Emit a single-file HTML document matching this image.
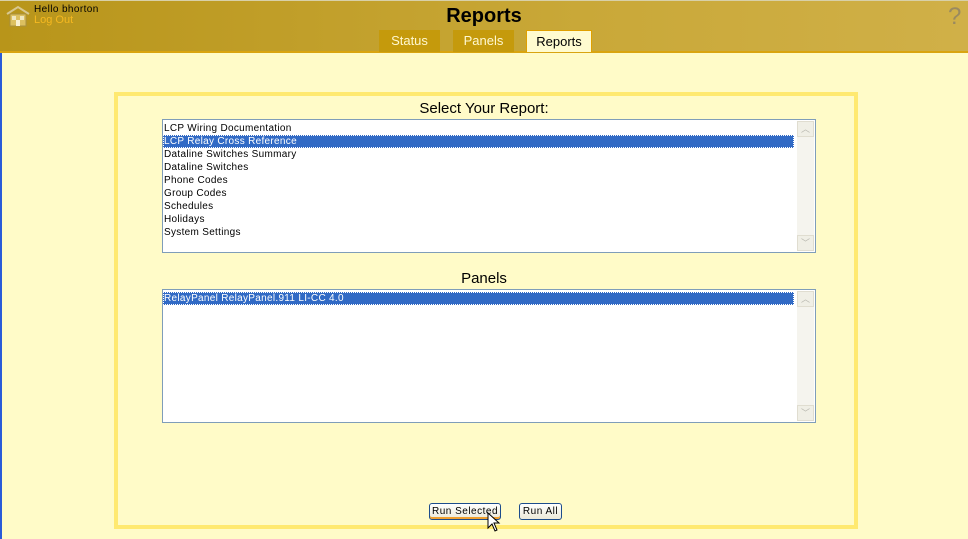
<!DOCTYPE html>
<html><head><style>
*{margin:0;padding:0;box-sizing:border-box}
body{width:968px;height:539px;overflow:hidden;background:#fffbc8;font-family:"Liberation Sans",sans-serif;position:relative}
#hdr{position:absolute;left:0;top:0;width:968px;height:53px;background:linear-gradient(to right,#b8951a,#c9a838 60%,#d0b048);border-top:1px solid #d8d0a8;border-bottom:2px solid #d9a410}
#lb{position:absolute;left:0;top:53px;width:2px;height:486px;background:#2a5bd8}
.t{position:absolute;top:30px;height:22px;font-size:13px;text-align:center;line-height:22px;color:#fff8d0;background:#c59a0c}
.sel{background:#fffbd0;color:#000;border:1px solid #e0a000;border-bottom:none}
#box{position:absolute;left:114px;top:92px;width:744px;height:437px;border:4px solid #ffe970}
.lst{position:absolute;left:162px;width:654px;height:134px;background:#fff;border:1px solid #7f9db9}
.row{height:13px;line-height:13px;font-size:10px;letter-spacing:0.3px;padding-left:1px;color:#000;white-space:nowrap}
.hl{background:#316ac5;color:#fff;width:631px;outline:1px dotted #fff;outline-offset:-1px}
.sb{position:absolute;right:1px;top:1px;width:17px;bottom:1px;background:#f5f4ee}
.ar{position:absolute;left:0;width:17px;height:16px;background:#f0efe6;border:1px solid #e0ddd0;color:#b8b8b0;font-size:9px;text-align:center;line-height:14px}
.lbl{position:absolute;width:968px;text-align:center;font-size:15px;color:#000}
.btn{position:absolute;top:503px;height:17px;font-size:10px;letter-spacing:0.5px;border:1px solid #1c4c8c;border-radius:3px;background:linear-gradient(#fff,#ece9d8);line-height:16px;text-align:center}
</style></head><body>
<div id="hdr"></div><div id="lb"></div>
<svg style="position:absolute;left:6px;top:5px" width="24" height="22" viewBox="0 0 24 22"><path d="M1 9 L12 2 L23 9" fill="none" stroke="#d8c890" stroke-width="2"/><rect x="4" y="9" width="16" height="12" fill="#dcc060" stroke="#a89040"/><rect x="6" y="11" width="4" height="4" fill="#f0e8c0"/><rect x="14" y="11" width="4" height="4" fill="#f0e8c0"/><rect x="10" y="15" width="4" height="6" fill="#f8f0d0"/></svg>
<div style="position:absolute;left:34px;top:4px;font-size:10px;letter-spacing:0.4px;color:#000">Hello bhorton</div>
<div style="position:absolute;left:34px;top:14px;font-size:11px;color:#f5b820">Log Out</div>
<div style="position:absolute;left:0;width:968px;top:5px;text-align:center;font-size:20px;font-weight:bold;color:#000">Reports</div>
<div style="position:absolute;left:948px;top:3px;font-size:24px;color:#9a8a60">?</div>
<div class="t" style="left:379px;width:61px">Status</div>
<div class="t" style="left:453px;width:61px">Panels</div>
<div class="t sel" style="left:526px;width:66px">Reports</div>
<div id="box"></div>
<div class="lbl" style="top:100px">Select Your Report:</div>
<div class="lst" style="top:119px"><div style="padding-top:2px">
<div class="row">LCP Wiring Documentation</div>
<div class="row hl">LCP Relay Cross Reference</div>
<div class="row">Dataline Switches Summary</div>
<div class="row">Dataline Switches</div>
<div class="row">Phone Codes</div>
<div class="row">Group Codes</div>
<div class="row">Schedules</div>
<div class="row">Holidays</div>
<div class="row">System Settings</div></div>
<div class="sb"><div class="ar" style="top:0">︿</div><div class="ar" style="bottom:0">﹀</div></div></div>
<div class="lbl" style="top:270px">Panels</div>
<div class="lst" style="top:289px"><div style="padding-top:2px">
<div class="row hl">RelayPanel RelayPanel.911 LI-CC 4.0</div></div>
<div class="sb"><div class="ar" style="top:0">︿</div><div class="ar" style="bottom:0">﹀</div></div></div>
<div class="btn" style="left:429px;width:72px;box-shadow:inset 0 -2px 0 #f0a030">Run Selected</div>
<div class="btn" style="left:519px;width:43px">Run All</div>
<svg style="position:absolute;left:487px;top:512px" width="14" height="22" viewBox="0 0 14 22"><path d="M1 1 L1 16 L5 12 L8 19 L10 18 L7 11 L12 11 Z" fill="#fff" stroke="#000"/></svg>
</body></html>
